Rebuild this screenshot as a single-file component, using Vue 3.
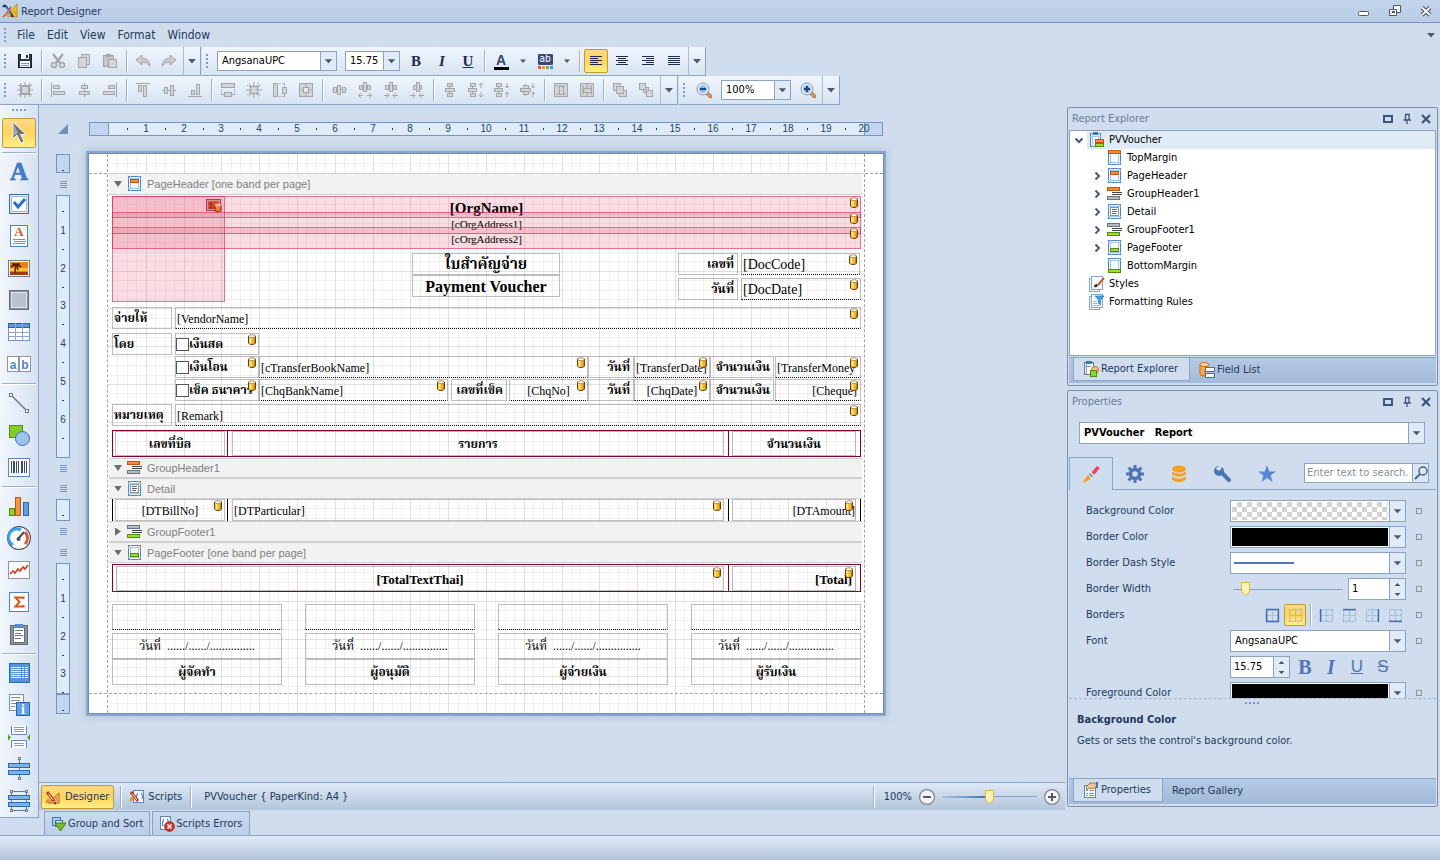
<script setup>
import { ref } from 'vue'

/* ---------- icon drawing helpers ---------- */
const box = (x, y, w, h, fill = '#d3d6d9', stroke = '#a3a5a8') =>
  `<rect x="${x + 0.5}" y="${y + 0.5}" width="${w - 1}" height="${h - 1}" fill="${fill}" stroke="${stroke}"/>`
const bar = (x, y, w, h, fill = '#a3a5a8') => `<rect x="${x}" y="${y}" width="${w}" height="${h}" fill="${fill}"/>`
const line = (d, stroke = '#a3a5a8', w = 1) => `<path d="${d}" fill="none" stroke="${stroke}" stroke-width="${w}"/>`
const lines = (rows, fill = '#1f2c47') => rows.map(([x, y, w]) => bar(x, y, w, 1, fill)).join('')
const dash = (d) => `<path d="${d}" fill="none" stroke="#a3a5a8" stroke-dasharray="1.5 1.5"/>`

const sheet = box(1, 0, 13, 15, '#f7fbff', '#4b83c4') + line('M3.500 0V15M11.500 0V15M1 2.500H14M1 12.500H14', '#a9c6e8')
const hTrio = bar(1, 7, 15, 1) + box(2, 5, 4, 6) + box(6, 3, 4, 10) + box(11, 5, 4, 6)
const vTrio = (x) => bar(x + 4, 1, 1, 14) + box(x + 2, 1, 6, 4) + box(x, 6, 10, 4) + box(x + 2, 11, 6, 4)
const sideArrows = (out) =>
  out
    ? line('M1.500 13.500H6M4 11L1.500 13.500L4 16M14.500 13.500H10M12 11L14.500 13.500L12 16')
    : line('M1 13.500H6M3.500 11L6 13.500L3.500 16M15 13.500H10M12.500 11L10 13.500L12.500 16')
const hSmall = bar(2, 5, 12, 1) + box(2, 3, 4, 5) + box(6, 0, 4, 10) + box(10, 3, 4, 5)
const vSmall = bar(4, 1, 1, 14) + box(2, 1, 6, 4) + box(0, 6, 9, 4) + box(2, 11, 6, 4)
const magnifier = (sign) =>
  `<path d="M10.500 10.500L14.500 14.500" stroke="#9c5a26" stroke-width="3.600" stroke-linecap="round"/><path d="M11 11L14.500 14.500" stroke="#eba35f" stroke-width="2" stroke-linecap="round"/><circle cx="7" cy="7" r="6" fill="#dcebfa" stroke="#8797b0"/><circle cx="7" cy="7" r="4.500" fill="#8dbdee" stroke="#f4f9ff"/>` +
  bar(4, 6, 6, 2, '#26447a') + (sign ? bar(6, 4, 2, 6, '#26447a') : '')
const orangeBar = (x, y, w) => box(x, y, w, 4, '#f08a3c', '#c4560f')
const greenBar = (x, y, w) => box(x, y, w, 4, '#a0dd2a', '#4f8f0b')
const grayBar = (x, y, w) => box(x, y, w, 4, '#b4bac2', '#6d737b')
const blueBar = (x, y, w, h) => box(x, y, w, h, '#7fb2ea', '#2d66b3')
const pencilRuler =
  '<path d="M3 14V4L14 14Z" transform="matrix(-1 0 0 1 17 0)" fill="#f3b35f" stroke="#b8661c"/><path d="M8.500 11.500H11.500V8.500Z" fill="#fde9c0" stroke="#b8661c" stroke-width=".6"/><path d="M2 3L9 12" stroke="#c23b2a" stroke-width="3"/><path d="M3.500 5L8 11" stroke="#f3ead8" stroke-width="1"/><path d="M9.500 13.500L10.800 15" stroke="#222" stroke-width="1.500"/><path d="M1 14L4 10" stroke="#e38f2d" stroke-width="2.400"/>'
const dbCan =
  '<path d="M1.500 2V9Q2 10.500 5 10.500T8.500 9V2Z" fill="#eeb52a" stroke="#6a3d0c"/><path d="M2.500 3H4.500V9.500H2.500Z" fill="#ffe98c"/><path d="M7.500 3V9" stroke="#c98512"/><ellipse cx="5" cy="2.200" rx="3.200" ry="1.500" fill="#fffdf2" stroke="#9a6a28" stroke-width=".7"/>'
const cell = (b) =>
  line('M2.500 2V14M8 2V14M13.500 2V14M2 2.500H14M2 8H14M2 13.500H14', '#8fa5cb').replace('/>', ' stroke-dasharray="1 1"/>') + line(b, '#4269b0', 1.4)

const icons = {
  app: '<path d="M5 13L15 1V14Z" fill="#f8c21c" stroke="#c98a10"/><path d="M10 11L13 8V11Z" fill="#dbe4f2" stroke="#b97b08" stroke-width=".6"/><path d="M1 4Q3 1 5 5L11 14" fill="none" stroke="#18306b" stroke-width="2.200"/><path d="M1 14L6 9L9 4" fill="none" stroke="#d8541c" stroke-width="1.600"/><path d="M4 4L9 12" stroke="#77b5ee"/>',
  save: box(1, 1, 14, 14, '#2c3549', '#1b2233') + bar(4, 1, 8, 5, '#f3f6fa') + bar(9, 2, 2, 3, '#2c3549') + bar(3, 8, 10, 6, '#f3f6fa') + lines([[4, 10, 8], [4, 12, 8]], '#8b94a5'),
  cut: '<path d="M3 1L10 10M13 1L6 10" stroke="#a3a5a8" stroke-width="2.200"/><circle cx="4" cy="12" r="2.500" fill="#dde3ea" stroke="#a3a5a8" stroke-width="1.500"/><circle cx="12" cy="12" r="2.500" fill="#dde3ea" stroke="#a3a5a8" stroke-width="1.500"/>',
  copy: box(5, 1, 9, 11) + box(2, 4, 9, 11),
  paste: box(1, 2, 11, 12, '#c3c5c8') + bar(4, 1, 5, 3) + box(6, 6, 9, 9),
  undo: '<path d="M1 7L7 2V5Q14 5 15 13Q12 9 7 9V12Z" fill="#c9cccf" stroke="#a3a5a8"/>',
  redo: '<path d="M15 7L9 2V5Q2 5 1 13Q4 9 9 9V12Z" fill="#c9cccf" stroke="#a3a5a8"/>',
  alignL: lines([[2, 3, 12], [2, 5, 8], [2, 7, 12], [2, 9, 8], [2, 11, 12]]),
  alignC: lines([[2, 3, 12], [4, 5, 8], [2, 7, 12], [4, 9, 8], [2, 11, 12]]),
  alignR: lines([[2, 3, 12], [6, 5, 8], [2, 7, 12], [6, 9, 8], [2, 11, 12]]),
  alignJ: lines([[2, 3, 12], [2, 5, 12], [2, 7, 12], [2, 9, 12], [2, 11, 12]]),
  gridAlign: box(4, 4, 8, 8) + line('M3.500 1V15M12.500 1V15M1 3.500H15M1 12.500H15') + line('M8 0V3M8 13V16M0 8H3M13 8H16'),
  left: bar(1, 1, 1, 14) + box(3, 3, 7, 4) + box(3, 9, 12, 4),
  center: bar(8, 1, 1, 14) + box(5, 3, 7, 4) + box(3, 9, 11, 4),
  right: bar(14, 1, 1, 14) + box(6, 3, 7, 4) + box(1, 9, 12, 4),
  top: bar(1, 1, 14, 1) + box(3, 3, 4, 7) + box(8, 3, 4, 12),
  middle: bar(1, 8, 14, 1) + box(3, 5, 4, 7) + box(9, 3, 4, 11),
  bottom: bar(1, 14, 14, 1) + box(4, 8, 4, 5) + box(9, 2, 4, 11),
  sameW: box(1, 1, 14, 5) + dash('M1.500 7V12M14.500 7V12') + box(4, 10, 8, 5) + line('M1 12.500H4M12 12.500H15'),
  gridSize: box(4, 4, 8, 8) + dash('M3.500 1V15M12.500 1V15M1 3.500H15M1 12.500H15') + line('M8 0V3M8 13V16M0 8H3M13 8H16'),
  sameH: box(1, 1, 5, 14) + dash('M7 1.500H13M7 14.500H13') + box(10, 5, 5, 7) + line('M12.500 1V4M12.500 12V15'),
  sameBoth: box(1, 1, 14, 14) + box(5, 5, 6, 6, '#e8ebee') + line('M8 1V5M8 11V15M1 8H5M11 8H15'),
  hEq: hTrio,
  hInc: hSmall + sideArrows(true),
  hDec: hSmall + sideArrows(false),
  hRem: box(4, 3, 4, 5) + box(7, 0, 4, 10) + box(10, 3, 3, 5) + sideArrows(false),
  vEq: vTrio(3),
  vInc: vSmall + line('M13 1V6M11 3L13 1L15 3M13 10V15M11 13L13 15L15 13'),
  vDec: vSmall + line('M13 1V6M11 4L13 6L15 4M13 10V15M11 12L13 10L15 12'),
  vRem: bar(5, 2, 1, 12) + box(3, 3, 6, 4) + box(0, 6, 11, 4) + box(3, 9, 6, 4) + line('M13 1V6M11 4L13 6L15 4M13 10V15M11 12L13 10L15 12'),
  cenH: box(1, 1, 14, 14) + line('M3 4H13M3 12H13') + box(6, 4, 5, 9),
  cenV: box(1, 1, 14, 14) + line('M4 3V13M12 3V13M8 2V14') + box(4, 6, 9, 5),
  front: box(1, 1, 8, 8) + box(7, 8, 8, 7) + box(4, 4, 8, 8),
  back: box(5, 5, 6, 6) + box(1, 1, 7, 7) + box(8, 8, 7, 7),
  zoomOut: magnifier(false),
  zoomIn: magnifier(true),
  drop: '<path d="M4 6H12L8 10.500Z" fill="#4d586e"/>',
  tPointer: '<path d="M6 1V18L10 14L14 22L17 20.500L13.500 13.500H19Z" fill="#6d7178" stroke="#f5f5f5"/><path d="M7 4V15L11 12Z" fill="#a4a8ad"/>',
  tLabel: '<text x="12" y="20" text-anchor="middle" font-family="Liberation Serif, serif" font-weight="700" font-size="25" fill="#3f7fcb" stroke="#2a5fa5" stroke-width=".5">A</text>',
  tCheck: box(2, 2, 20, 20, '#e3eaf3', '#3c6ea9') + box(4, 4, 16, 16, '#fff', '#a9b7c9') + line('M7 10L11 15L18 7', '#2a70c0', 3),
  tRich: box(3, 1, 18, 22, '#fbfdff', '#4b83c4') + '<text x="12" y="12" text-anchor="middle" font-family="Liberation Serif, serif" font-weight="700" font-size="13" fill="#d05a17">A</text>' + lines([[6, 15, 12], [7, 17, 12], [6, 19, 12]], '#7193bb'),
  tPic: box(1, 4, 22, 17, '#f7f7f7', '#767c85') + bar(3, 6, 18, 13, '#e8831b') + bar(3, 12, 18, 3, '#f8c23a') + bar(3, 16, 18, 3, '#a33b0c') + line('M8 17Q8 12 9 9M4 11L9 8L14 11M5 8L9 8L13 8M9 8L11 14', '#5a1f04', 1.5),
  tPanel: box(2, 2, 20, 20, '#8d959f', '#636b76') + box(4, 4, 16, 16, '#b9c1cb', '#dde3ea'),
  tTable: box(1, 3, 22, 18, '#fff', '#7593b8') + box(1, 3, 22, 5, '#5c9be0', '#2a64ad') + line('M8.500 3V21M15.500 3V21M1 12.500H23M1 16.500H23', '#8ea6c4'),
  tText: box(0, 4, 12, 16, '#fff', '#8d949d') + box(12, 4, 12, 16, '#fff', '#8d949d') + '<text x="6" y="17" text-anchor="middle" font-family="Liberation Sans, sans-serif" font-weight="700" font-size="12" fill="#4a84cd">a</text><text x="18" y="17" text-anchor="middle" font-family="Liberation Sans, sans-serif" font-weight="700" font-size="12" fill="#4a84cd">b</text>',
  tLine: line('M4 4L20 20', '#6e7784', 1.4) + box(2, 2, 4, 4, '#fff', '#6e7784') + box(18, 18, 4, 4, '#fff', '#6e7784'),
  tShape: box(2, 2, 14, 13, '#86cc26', '#4b9010') + '<circle cx="15.500" cy="15.500" r="7" fill="#9cc3f0" stroke="#3c6fb5"/>',
  tBar: box(1, 3, 22, 19, '#fbfdff', '#5c87bd') + [4, 6, 9, 11, 14, 17, 19].map((x, i) => bar(x, 6, i % 3 === 1 ? 2 : 1, 12, '#3f4c60')).join(''),
  tChart: box(2, 14, 6, 8, '#8fd02a', '#4b9010') + box(8, 3, 6, 19, '#f59243', '#c1560f') + box(16, 8, 6, 14, '#5e9ee2', '#2a64ad'),
  tGauge: '<circle cx="12" cy="12" r="11.400" fill="#fff" stroke="#444c57" stroke-width="1.200"/><path d="M6 19A8.500 8.500 0 0 1 14 4" fill="none" stroke="#3aa2e8" stroke-width="3"/><path d="M18 6A8.500 8.500 0 0 1 18 18" fill="none" stroke="#d9582b" stroke-width="3"/><path d="M11 13L17 6" stroke="#444c57" stroke-width="2"/><circle cx="11.500" cy="13" r="2" fill="#444c57"/>',
  tSpark: box(1, 3, 22, 18, '#fafafa', '#8d949d') + line('M3 16L6 13L8 15L11 11L13 13L16 9L18 11L21 7', '#cf3a1e', 1.6),
  tSigma: box(2, 2, 20, 20, '#fbfdff', '#4b83c4') + line('M16.500 9V7.500H8.500L12.500 12L8.500 16.500H16.500V15', '#d05a17', 2),
  tClip: box(3, 3, 18, 20, '#8f97a1', '#616974') + box(6, 5, 12, 16, '#fff', '#616974') + bar(8, 2, 8, 4, '#4f8fd6') + lines([[8, 8, 8], [8, 11, 6], [8, 13, 8], [8, 16, 6]], '#6e7784'),
  tToc: box(2, 2, 21, 20, '#5a93dc', '#2f67b4') + lines([[4, 6, 10], [4, 8, 10], [4, 10, 10], [4, 12, 10], [4, 14, 10], [4, 16, 10], [15, 6, 2], [15, 8, 2], [15, 10, 2], [15, 12, 2], [15, 14, 2], [15, 16, 2], [18, 6, 3], [18, 8, 3], [18, 10, 3], [18, 12, 3], [18, 14, 3], [18, 16, 3]], '#e8f2fd'),
  tInfo: box(2, 1, 15, 17, '#fbfdff', '#7593b8') + lines([[4, 4, 9], [4, 7, 9], [4, 10, 6], [4, 13, 4]], '#7d8896') + box(9, 9, 14, 14, '#5f9fe6', '#2a64ad') + '<text x="16" y="21" text-anchor="middle" font-family="Liberation Serif, serif" font-weight="700" font-size="14" fill="#fff">i</text>',
  tBreak: line('M4.500 1V9.500H19.500V1M4.500 23V15.500H19.500V23', '#5c87bd') + bar(5, 1, 14, 8, '#fbfdff') + bar(5, 16, 14, 7, '#fbfdff') + lines([[7, 2, 10], [7, 4, 10], [7, 6, 10], [7, 18, 10], [7, 20, 10]], '#8f99a7') + '<path d="M1 9V16L4 12.500ZM23 9V16L20 12.500Z" fill="#55a514"/>',
  tCross1: bar(12, 2, 1, 20, '#6e7784') + box(11, 0, 3, 3, '#fff', '#6e7784') + box(11, 20, 3, 3, '#fff', '#6e7784') + blueBar(1, 6, 22, 5) + blueBar(1, 13, 22, 5),
  tCross2: line('M4.500 2V22M19.500 2V22M4 2.500H20M4 21.500H20', '#6e7784') + box(3, 1, 3, 3, '#fff', '#6e7784') + box(18, 1, 3, 3, '#fff', '#6e7784') + box(3, 20, 3, 3, '#fff', '#6e7784') + box(18, 20, 3, 3, '#fff', '#6e7784') + blueBar(1, 6, 22, 5) + blueBar(1, 13, 22, 5),
  bPH: sheet + orangeBar(3, 3, 9),
  bTM: sheet + orangeBar(1, 0, 13),
  bPF: sheet + greenBar(3, 8, 9),
  bBM: sheet + greenBar(1, 11, 13),
  bDT: sheet + box(3, 3, 9, 9, '#fff', '#8a929c') + lines([[5, 5, 5], [5, 7, 5], [5, 9, 4]], '#59616c'),
  bGH: orangeBar(0, 1, 13) + lines([[5, 6, 10], [5, 8, 10]], '#3c4450') + grayBar(0, 10, 13),
  bGF: grayBar(0, 1, 13) + lines([[5, 6, 10], [5, 8, 10]], '#3c4450') + greenBar(0, 10, 13),
  report: box(1, 1, 11, 14, '#f7fbff', '#4b83c4') + line('M3.500 1V15M9.500 1V15M1 4.500H12', '#a9c6e8') + bar(4, 0, 5, 3, '#3b78c4') + orangeBar(6, 7, 9) + greenBar(6, 11, 9),
  styles: box(0, 2, 11, 14, '#e9f0f8', '#86a9cf') + box(2, 0, 12, 14, '#fbfdff', '#86a9cf') + '<path d="M5 11Q5 8 8 8L9 10Q7 12 5 11Z" fill="#3b2a20"/><path d="M9 9L15 2" stroke="#c9572a" stroke-width="2"/>',
  rules: box(0, 2, 11, 14, '#e9f0f8', '#86a9cf') + box(2, 0, 12, 14, '#fbfdff', '#86a9cf') + lines([[4, 7, 4], [4, 9, 5], [4, 11, 7]], '#a7b1be') + '<path d="M6 2H15L11.500 6V11L9.500 9V6Z" fill="#3fa9e4" stroke="#1d77ba" stroke-width=".7"/>',
  expTab: box(1, 1, 10, 13, '#f7fbff', '#6c7684') + bar(3, 0, 6, 3, '#3b78c4') + line('M3.500 3V13M1 5.500H8', '#8da0b8') + '<circle cx="12" cy="9" r="3.500" fill="#f8c08a" stroke="#c8691c"/>' + box(7, 9, 7, 7, '#8fd02a', '#4b9010'),
  fields: '<path d="M1 2V12Q1 14 5 14H6V8H9V2Z" fill="#f9a84a" stroke="#c86a14"/><ellipse cx="5.500" cy="2.500" rx="4.500" ry="2" fill="#fdd9a8" stroke="#c86a14"/>' + box(6, 5, 10, 5, '#fff', '#3e72b6') + box(6, 11, 10, 5, '#fff', '#3e72b6'),
  propsTab: box(1, 3, 12, 13, '#fbfdff', '#5b86ba') + lines([[3, 8, 2], [6, 8, 5], [3, 11, 2], [6, 11, 5], [3, 13, 2], [6, 13, 5]], '#7d93ad') + '<path d="M3 5L7 1H12L14 4L10 7L6 6L4 8Z" fill="#efc38c" stroke="#99622a" stroke-width=".8"/>' + bar(13, 0, 2, 6, '#3b78c4'),
  designer: pencilRuler,
  scripts: box(4, 1, 11, 13, '#f7fbff', '#5b86ba') + line('M9 4Q8 4 8 6T7 8Q8 8 8 10M12 4Q13 4 13 6T14 8Q13 8 13 10', '#2d66b3') + '<path d="M2 3L9 12" stroke="#c23b2a" stroke-width="3"/><path d="M3.500 5L8 11" stroke="#f3ead8"/><path d="M1 12L4 8" stroke="#e38f2d" stroke-width="2.400"/>',
  group: box(1, 1, 9, 9, '#a8cdf3', '#3e72b6') + box(4, 4, 8, 7, '#d7e7f8', '#3e72b6') + '<path d="M4 7H15L9.500 15Z" fill="#76c01f" stroke="#3f8208"/>',
  errors: box(1, 0, 11, 14, '#f7fbff', '#5b86ba') + line('M5 3Q4 3 4 5T3 7Q4 7 4 10M8 3Q9 3 9 5', '#2d66b3') + '<circle cx="10.500" cy="10.500" r="4.800" fill="#d8382a" stroke="#9c1e14"/><path d="M8.500 8.500L12.500 12.500M12.500 8.500L8.500 12.500" stroke="#fff" stroke-width="1.600"/>',
  maxi: '<rect x="4" y="5" width="8" height="6" fill="none" stroke="#40527a" stroke-width="2"/>',
  pin: '<path d="M6 3.500H11M6.500 3V9M10 3V9M4.500 9H12M8 9V13" stroke="#40527a" stroke-width="1.300" fill="none"/>',
  close: '<path d="M4 4L12 12M12 4L4 12" stroke="#40527a" stroke-width="2.200"/>',
  winMin: '<rect x="2.500" y="8.500" width="10" height="4" rx="1" fill="#fff" stroke="#4d5568"/>',
  winRes: '<path d="M6.500 2.500H13.500V9.500H6.500Z" fill="#fff" stroke="#4d5568"/><path d="M2.500 6.500H9.500V12.500H2.500Z" fill="#fff" stroke="#4d5568"/><rect x="5.500" y="8.500" width="2" height="1" fill="none" stroke="#4d5568"/>',
  winClose: '<path d="M4 4.500L12 12M12 4.500L4 12" stroke="#4d5568" stroke-width="4.200"/><path d="M4 4.500L12 12M12 4.500L4 12" stroke="#fff" stroke-width="1.800"/>',
  brush: '<path d="M9 8L15 1L18 3L12 10Z" fill="#e8465a"/><path d="M7 9L10 12L12 10L9 7Z" fill="#fff"/><path d="M7 9L10 12L11 11L8 8Z" fill="#4269b0"/><path d="M6 10L9 13Q7 16 0 18Q3 15 4 12Z" fill="#f7a321"/>',
  gear: '<circle cx="9" cy="9" r="4.500" fill="none" stroke="#4f74b3" stroke-width="3.500"/><path d="M9 0V4M9 14V18M0 9H4M14 9H18M2.600 2.600L5.500 5.500M12.500 12.500L15.400 15.400M15.400 2.600L12.500 5.500M5.500 12.500L2.600 15.400" stroke="#4f74b3" stroke-width="3"/>',
  data: '<ellipse cx="9" cy="4" rx="7" ry="3.500" fill="#f7a11a"/><path d="M2 6.500Q9 11 16 6.500V9.500Q9 14 2 9.500ZM2 11.500Q9 16 16 11.500V14.500Q9 20 2 14.500Z" fill="#f7a11a"/>',
  wrench: '<path d="M7 7L15 15" stroke="#4f74b3" stroke-width="4" stroke-linecap="round"/><path d="M5 1A5 5 0 1 0 10 6A5 5 0 0 0 8 2L6 6L3 5L2 3Z" fill="#4f74b3"/>',
  star: '<path d="M9 0L11.300 6.500H18L12.600 10.600L14.600 17L9 13.100L3.400 17L5.400 10.600L0 6.500H6.700Z" fill="#5886d8"/>',
  search: '<circle cx="10" cy="6" r="4" fill="none" stroke="#4d607f" stroke-width="1.400"/><path d="M7 9L2 14" stroke="#4d607f" stroke-width="2"/>',
  zMinus: '<circle cx="8" cy="8" r="7.400" fill="#f2f2f4" stroke="#7d8493" stroke-width="1.200"/>' + bar(4, 7, 8, 2, '#555b66'),
  zPlus: '<circle cx="8" cy="8" r="7.400" fill="#f2f2f4" stroke="#7d8493" stroke-width="1.200"/>' + bar(4, 7, 8, 2, '#555b66') + bar(7, 4, 2, 8, '#555b66'),
  bdAll: cell('M2.500 2.500H13.500V13.500H2.500Z'),
  bdNone: cell(''),
  bdL: cell('M2.500 2V14'),
  bdT: cell('M2 2.500H14'),
  bdR: cell('M13.500 2V14'),
  bdB: cell('M2 13.500H14'),
}

/* ---------- toolbars ---------- */
const menus = ['File', 'Edit', 'View', 'Format', 'Window']
const editGroups = [['save'], ['cut', 'copy', 'paste'], ['undo', 'redo']]
const layoutGroups = [
  ['gridAlign'],
  ['left', 'center', 'right'],
  ['top', 'middle', 'bottom'],
  ['sameW', 'gridSize', 'sameH', 'sameBoth'],
  ['hEq', 'hInc', 'hDec', 'hRem'],
  ['vEq', 'vInc', 'vDec', 'vRem'],
  ['cenH', 'cenV'],
  ['front', 'back'],
]
const toolGroups = [
  ['tPointer'],
  ['tLabel', 'tCheck', 'tRich', 'tPic', 'tPanel', 'tTable', 'tText'],
  ['tLine', 'tShape', 'tBar'],
  ['tChart', 'tGauge', 'tSpark', 'tSigma', 'tClip'],
  ['tToc', 'tInfo', 'tBreak', 'tCross1', 'tCross2'],
]

/* ---------- report surface ---------- */
const CM = 37.8
const gridPath = (w, h, major) => {
  let d = ''
  for (let i = 1; i * CM / 4 < w; i++) if ((i % 4 === 0) === major) d += `M${Math.round(i * CM / 4) + 0.5} 0V${h}`
  for (let i = 1; i * CM / 4 < h; i++) if ((i % 4 === 0) === major) d += `M0 ${Math.round(i * CM / 4) + 0.5}H${w}`
  return d
}
const hTicks = Array.from({ length: 41 }, (_, i) => ({ at: 18 + Math.round((i * CM) / 2), label: i % 2 ? '' : i ? String(i / 2) : '', dot: i % 2 === 1 }))
const vTicks = (h) => {
  const out = []
  for (let i = 1; Math.round((i * CM) / 2) - 2 < h; i++) {
    const at = Math.round((i * CM) / 2) - 2
    if (i % 2) out.push({ at, label: '', dot: true })
    else if (at < h - 4) out.push({ at, label: String(i / 2) })
  }
  return out
}
const vRuler = [
  { h: 19, edge: true }, { gap: 22 }, { h: 263 }, { gap: 20 }, { gap: 21 }, { h: 22 }, { gap: 21 }, { gap: 21 }, { h: 131 }, { h: 20, edge: true },
]

const c = (x, y, w, h, text = '', cls = '', db = false) => ({ x, y, w, h, text, cls, db })
const bands = [
  { h: 19 },
  {
    title: 'PageHeader [one band per page]', icon: 'bPH', open: true, head: 22, h: 263,
    items: [
      c(4, 1, 113, 106, '', 'pink pic'),
      c(4, 1, 749, 22, '[OrgName]', 'pink mid b s15', true),
      c(4, 17, 749, 22, '[cOrgAddress1]', 'pink mid s11', true),
      c(4, 32, 749, 22, '[cOrgAddress2]', 'pink mid s11', true),
      c(304, 58, 148, 22, 'ใบสำคัญจ่าย', 'mid b th s15'),
      c(304, 80, 148, 22, 'Payment Voucher', 'mid b s16'),
      c(570, 58, 60, 22, 'เลขที่', 'end b th'),
      c(633, 58, 119, 22, '[DocCode]', 'dot s14', true),
      c(570, 83, 60, 22, 'วันที่', 'end b th'),
      c(633, 83, 120, 22, '[DocDate]', 'dot s14', true),
      c(4, 112, 60, 22, 'จ่ายให้', 'b th'),
      c(67, 112, 686, 22, '[VendorName]', 'dot', true),
      c(4, 138, 60, 22, 'โดย', 'b th'),
      c(67, 138, 84, 22, 'เงินสด', 'b th chk', true),
      c(67, 161, 84, 22, 'เงินโอน', 'b th chk', true),
      c(151, 161, 329, 22, '[cTransferBookName]', 'dot', true),
      c(480, 161, 46, 22, 'วันที่', 'end b th'),
      c(526, 161, 76, 22, '[TransferDate]', 'dot', true),
      c(602, 161, 64, 22, 'จำนวนเงิน', 'end b th'),
      c(667, 161, 86, 22, '[TransferMoney', 'dot', true),
      c(67, 184, 84, 22, 'เช็ค ธนาคาร', 'b th chk', true),
      c(151, 184, 189, 22, '[ChqBankName]', 'dot', true),
      c(343, 184, 56, 22, 'เลขที่เช็ค', 'end b th'),
      c(401, 184, 79, 22, '[ChqNo]', 'dot mid', true),
      c(480, 184, 46, 22, 'วันที่', 'end b th'),
      c(526, 184, 76, 22, '[ChqDate]', 'dot mid', true),
      c(602, 184, 64, 22, 'จำนวนเงิน', 'end b th'),
      c(667, 184, 86, 22, '[Cheque]', 'dot end', true),
      c(4, 209, 60, 22, 'หมายเหตุ', 'b th'),
      c(67, 209, 686, 22, '[Remark]', 'dot', true),
      c(4, 235, 749, 27, '', 'frame'),
      c(119, 235, 1, 27, '', 'rule'),
      c(620, 235, 1, 27, '', 'rule'),
      c(7, 236, 110, 25, 'เลขที่บิล', 'mid b th'),
      c(124, 236, 492, 25, 'รายการ', 'mid b th'),
      c(624, 236, 124, 25, 'จำนวนเงิน', 'mid b th'),
    ],
  },
  { title: 'GroupHeader1', icon: 'bGH', open: true, head: 20, h: 0 },
  {
    title: 'Detail', icon: 'bDT', open: true, head: 21, h: 22,
    items: [
      c(4, 0, 749, 22, '', 'sides'),
      c(119, 0, 1, 22, '', 'ink'),
      c(620, 0, 1, 22, '', 'ink'),
      c(7, 0, 110, 22, '[DTBillNo]', 'mid', true),
      c(124, 0, 492, 22, '[DTParticular]', '', true),
      c(624, 0, 124, 22, '[DTAmount]', 'end flush', true),
    ],
  },
  { title: 'GroupFooter1', icon: 'bGF', open: false, head: 21, h: 0 },
  {
    title: 'PageFooter [one band per page]', icon: 'bPF', open: true, head: 21, h: 131,
    items: [
      c(4, 1, 749, 28, '', 'frame'),
      c(620, 1, 1, 28, '', 'rule'),
      c(8, 3, 608, 25, '[TotalTextThai]', 'mid b s13', true),
      c(624, 3, 124, 25, '[Total]', 'end b s13', true),
      ...['ผู้จัดทำ', 'ผู้อนุมัติ', 'ผู้จ่ายเงิน', 'ผู้รับเงิน'].flatMap((who, i) => [
        c(4 + 193 * i, 41, 170, 26, '', 'dot'),
        c(4 + 193 * i, 70, 170, 26, 'วันที่  ....../....../...............', 'mid th'),
        c(4 + 193 * i, 96, 170, 26, who, 'mid b th'),
      ]),
    ],
  },
  { h: 19 },
]

/* ---------- explorer and properties ---------- */
const tree = [
  { label: 'PVVoucher', icon: 'report', level: 0, arrow: 'down', active: true },
  { label: 'TopMargin', icon: 'bTM', level: 1 },
  { label: 'PageHeader', icon: 'bPH', level: 1, arrow: 'right' },
  { label: 'GroupHeader1', icon: 'bGH', level: 1, arrow: 'right' },
  { label: 'Detail', icon: 'bDT', level: 1, arrow: 'right' },
  { label: 'GroupFooter1', icon: 'bGF', level: 1, arrow: 'right' },
  { label: 'PageFooter', icon: 'bPF', level: 1, arrow: 'right' },
  { label: 'BottomMargin', icon: 'bBM', level: 1 },
  { label: 'Styles', icon: 'styles', level: 0 },
  { label: 'Formatting Rules', icon: 'rules', level: 0 },
]
const propTabs = ['brush', 'gear', 'data', 'wrench', 'star']
const borderWidth = ref(1)
const thickness = ref(8)
const fontSize = ref('15.75')
const zoom = ref(50)
const query = ref('')
</script>

<template>
  <div class="app">
    <header class="titlebar">
      <svg class="i16" viewBox="0 0 16 16" v-html="icons.app"></svg>
      <h1>Report Designer</h1>
      <div class="winbtns">
        <button v-for="n in ['winMin', 'winRes', 'winClose']" :key="n" :aria-label="n"><svg class="i16" viewBox="0 0 16 16" v-html="icons[n]"></svg></button>
      </div>
    </header>

    <nav class="menubar">
      <span class="grip"></span>
      <button v-for="m in menus" :key="m">{{ m }}</button>
      <button class="more" aria-label="More"><svg class="i16" viewBox="0 0 16 16" v-html="icons.drop"></svg></button>
    </nav>

    <div class="toolrow">
      <div class="toolbar">
        <span class="grip"></span>
        <template v-for="(g, gi) in editGroups" :key="gi">
          <span v-if="gi" class="sep"></span>
          <button v-for="n in g" :key="n" class="tb" :aria-label="n"><svg class="i16" viewBox="0 0 16 16" v-html="icons[n]"></svg></button>
        </template>
        <button class="overflow" aria-label="Toolbar options"><svg class="i16" viewBox="0 0 16 16" v-html="icons.drop"></svg></button>
      </div>
      <div class="toolbar">
        <span class="grip"></span>
        <span class="combo w120"><select aria-label="Font name"><option>AngsanaUPC</option></select><svg class="arrow" viewBox="0 0 16 16" v-html="icons.drop"></svg></span>
        <span class="combo w55"><select aria-label="Font size"><option>15.75</option></select><svg class="arrow" viewBox="0 0 16 16" v-html="icons.drop"></svg></span>
        <button class="tb letter"><b>B</b></button>
        <button class="tb letter"><i>I</i></button>
        <button class="tb letter"><u>U</u></button>
        <span class="sep"></span>
        <button class="tb fore" aria-label="Foreground color"><span>A</span></button>
        <button class="tiny" aria-label="Pick foreground"><svg class="i12" viewBox="0 0 16 16" v-html="icons.drop"></svg></button>
        <button class="tb back" aria-label="Background color"><span>ab</span><em></em></button>
        <button class="tiny" aria-label="Pick background"><svg class="i12" viewBox="0 0 16 16" v-html="icons.drop"></svg></button>
        <span class="sep"></span>
        <button v-for="n in ['alignL', 'alignC', 'alignR', 'alignJ']" :key="n" class="tb" :class="{ on: n === 'alignL' }" :aria-label="n"><svg class="i16" viewBox="0 0 16 16" v-html="icons[n]"></svg></button>
        <button class="overflow" aria-label="Toolbar options"><svg class="i16" viewBox="0 0 16 16" v-html="icons.drop"></svg></button>
      </div>
    </div>
    <div class="toolrow">
      <div class="toolbar">
        <span class="grip"></span>
        <template v-for="(g, gi) in layoutGroups" :key="gi">
          <span v-if="gi" class="sep"></span>
          <button v-for="n in g" :key="n" class="tb" :aria-label="n"><svg class="i16" viewBox="0 0 16 16" v-html="icons[n]"></svg></button>
        </template>
        <button class="overflow" aria-label="Toolbar options"><svg class="i16" viewBox="0 0 16 16" v-html="icons.drop"></svg></button>
      </div>
      <div class="toolbar">
        <span class="grip"></span>
        <button class="tb" aria-label="Zoom out"><svg class="i16" viewBox="0 0 16 16" v-html="icons.zoomOut"></svg></button>
        <span class="combo w70"><select aria-label="Zoom"><option>100%</option></select><svg class="arrow" viewBox="0 0 16 16" v-html="icons.drop"></svg></span>
        <button class="tb" aria-label="Zoom in"><svg class="i16" viewBox="0 0 16 16" v-html="icons.zoomIn"></svg></button>
        <button class="overflow" aria-label="Toolbar options"><svg class="i16" viewBox="0 0 16 16" v-html="icons.drop"></svg></button>
      </div>
    </div>

    <main class="work">
      <aside class="toolbox">
        <span class="hgrip"></span>
        <template v-for="(g, gi) in toolGroups" :key="gi">
          <span v-if="gi" class="hsep"></span>
          <button v-for="n in g" :key="n" :class="{ on: n === 'tPointer' }" :aria-label="n"><svg class="i24" viewBox="0 0 24 24" v-html="icons[n]"></svg></button>
        </template>
      </aside>

      <section class="center">
        <div class="canvas">
          <span class="corner"></span>
          <div class="hruler">
            <span v-for="(t, i) in hTicks" :key="i" class="tick" :class="{ pt: t.dot }" :style="{ left: t.at + 'px' }">{{ t.label }}</span>
          </div>
          <div class="vruler">
            <template v-for="(s, i) in vRuler" :key="i">
              <span v-if="s.gap" class="vgap" :style="{ height: s.gap + 'px' }"></span>
              <div v-else class="vseg" :class="{ edge: s.edge }" :style="{ height: s.h + 'px' }">
                <span v-for="(t, k) in vTicks(s.h)" :key="k" class="tick" :class="{ pt: t.dot }" :style="{ top: t.at + 'px' }">{{ t.label }}</span>
              </div>
            </template>
          </div>
          <div class="page">
            <div class="sheet">
              <div v-for="(b, i) in bands" :key="i" class="band">
                <div v-if="b.title" class="bandhead" :style="{ height: b.head + 'px' }">
                  <span class="tri" :class="{ shut: !b.open }"></span>
                  <svg class="i16" viewBox="0 0 16 16" v-html="icons[b.icon]"></svg>
                  <span>{{ b.title }}</span>
                </div>
                <div v-if="b.h" class="bandbody" :style="{ height: b.h + 'px' }">
                  <svg class="grid" width="755" :height="b.h">
                    <path :d="gridPath(755, b.h, false)" stroke="#f0f0f0" />
                    <path :d="gridPath(755, b.h, true)" stroke="#e0e0e0" />
                  </svg>
                  <div v-for="(it, k) in b.items" :key="k" class="item" :class="it.cls" :style="{ left: it.x + 'px', top: it.y + 'px', width: it.w + 'px', height: it.h + 'px' }">
                    <input v-if="it.cls.includes('chk')" type="checkbox" :aria-label="it.text" />
                    <span v-if="it.text">{{ it.text }}</span>
                    <svg v-if="it.db" class="db" viewBox="0 0 10 11" v-html="dbCan"></svg>
                    <svg v-if="it.cls.includes('pic')" class="picmark" viewBox="0 0 16 14">
                      <rect x=".5" y=".5" width="14" height="11" fill="#d9a3ac" stroke="#8d4450" />
                      <rect x="2" y="2" width="11" height="8" fill="#d8532c" />
                      <path d="M3 5Q5 3 7 5M5 4V9M3 9H9" fill="none" stroke="#7c1f10" />
                      <path d="M9 6V12Q12 14 15 12V6Z" fill="#f08a22" stroke="#6b2408" />
                      <ellipse cx="12" cy="6" rx="3" ry="1.500" fill="#ffc898" />
                    </svg>
                  </div>
                </div>
              </div>
            </div>
          </div>
        </div>

        <footer class="viewbar">
          <button class="view on"><svg class="i16" viewBox="0 0 16 16" v-html="icons.designer"></svg>Designer</button>
          <span class="sep"></span>
          <button class="view"><svg class="i16" viewBox="0 0 16 16" v-html="icons.scripts"></svg>Scripts</button>
          <span class="sep"></span>
          <span class="paper">PVVoucher { PaperKind: A4 }</span>
          <div class="zoomer">
            <span class="sep"></span>
            <span>100%</span>
            <button aria-label="Smaller"><svg class="i16" viewBox="0 0 16 16" v-html="icons.zMinus"></svg></button>
            <input v-model="zoom" type="range" class="slider glow" aria-label="Zoom level" />
            <button aria-label="Larger"><svg class="i16" viewBox="0 0 16 16" v-html="icons.zPlus"></svg></button>
          </div>
        </footer>
        <div class="hidden-tabs">
          <button><svg class="i16" viewBox="0 0 16 16" v-html="icons.group"></svg>Group and Sort</button>
          <button><svg class="i16" viewBox="0 0 16 16" v-html="icons.errors"></svg>Scripts Errors</button>
        </div>
      </section>

      <aside class="dock">
        <section class="panel explorer">
          <header>
            <h2>Report Explorer</h2>
            <button v-for="n in ['maxi', 'pin', 'close']" :key="n" :aria-label="n"><svg class="i16" viewBox="0 0 16 16" v-html="icons[n]"></svg></button>
          </header>
          <ul class="tree">
            <li v-for="t in tree" :key="t.label" :class="['l' + t.level, { active: t.active }]">
              <span class="twist"><svg v-if="t.arrow" class="i10" viewBox="0 0 10 10"><path :d="t.arrow === 'down' ? 'M1.500 3.500L5 7L8.500 3.500' : 'M3.500 1.500L7 5L3.500 8.500'" fill="none" stroke="#48597c" stroke-width="2" /></svg></span>
              <span class="node"><svg class="i16" viewBox="0 0 16 16" v-html="icons[t.icon]"></svg>{{ t.label }}</span>
            </li>
          </ul>
          <div class="tabs">
            <button class="cur"><svg class="i16" viewBox="0 0 16 16" v-html="icons.expTab"></svg>Report Explorer</button>
            <button><svg class="i16" viewBox="0 0 16 16" v-html="icons.fields"></svg>Field List</button>
          </div>
        </section>

        <section class="panel props">
          <header>
            <h2>Properties</h2>
            <button v-for="n in ['maxi', 'pin', 'close']" :key="n" :aria-label="n"><svg class="i16" viewBox="0 0 16 16" v-html="icons[n]"></svg></button>
          </header>
          <span class="combo target"><select aria-label="Selected object"><option>PVVoucher&nbsp;&nbsp; Report</option></select><svg class="arrow" viewBox="0 0 16 16" v-html="icons.drop"></svg></span>
          <div class="cats">
            <button v-for="n in propTabs" :key="n" :class="{ cur: n === 'brush' }" :aria-label="n"><svg class="i18" viewBox="0 0 18 18" v-html="icons[n]"></svg></button>
            <div class="find">
              <input v-model="query" type="text" placeholder="Enter text to search." aria-label="Search properties" />
              <button aria-label="Search"><svg class="i16" viewBox="0 0 16 16" v-html="icons.search"></svg></button>
            </div>
          </div>
          <div class="rows">
            <div class="row">
              <label for="bg">Background Color</label>
              <span class="combo"><button id="bg" class="swatch checker" aria-label="Transparent"></button><svg class="arrow" viewBox="0 0 16 16" v-html="icons.drop"></svg></span><i></i>
            </div>
            <div class="row">
              <label for="bc">Border Color</label>
              <span class="combo"><button id="bc" class="swatch black" aria-label="Black"></button><svg class="arrow" viewBox="0 0 16 16" v-html="icons.drop"></svg></span><i></i>
            </div>
            <div class="row">
              <label for="bs">Border Dash Style</label>
              <span class="combo"><button id="bs" class="swatch solid" aria-label="Solid"></button><svg class="arrow" viewBox="0 0 16 16" v-html="icons.drop"></svg></span><i></i>
            </div>
            <div class="row">
              <label for="bw">Border Width</label>
              <span class="widths">
                <input v-model="thickness" type="range" class="slider" aria-label="Border width slider" />
                <span class="spin"><input id="bw" v-model="borderWidth" type="text" /><span class="updown"></span></span>
              </span><i></i>
            </div>
            <div class="row">
              <span class="label">Borders</span>
              <span class="borders">
                <button aria-label="All borders"><svg class="i18" viewBox="1 1 14 14" v-html="icons.bdAll"></svg></button>
                <button class="on" aria-label="No borders"><svg class="i18" viewBox="1 1 14 14" v-html="icons.bdNone"></svg></button>
                <span class="sep"></span>
                <button v-for="n in ['bdL', 'bdT', 'bdR', 'bdB']" :key="n" :aria-label="n"><svg class="i18" viewBox="1 1 14 14" v-html="icons[n]"></svg></button>
              </span><i></i>
            </div>
            <div class="row">
              <label for="fn">Font</label>
              <span class="combo"><select id="fn"><option>AngsanaUPC</option></select><svg class="arrow" viewBox="0 0 16 16" v-html="icons.drop"></svg></span><i></i>
            </div>
            <div class="row">
              <span class="label"></span>
              <span class="fontrow">
                <span class="spin"><input v-model="fontSize" type="text" aria-label="Size" /><span class="updown"></span></span>
                <button><b>B</b></button><button><i>I</i></button><button class="sans"><u>U</u></button><button class="sans"><s>S</s></button>
              </span>
            </div>
            <div class="row">
              <label for="fc">Foreground Color</label>
              <span class="combo"><button id="fc" class="swatch black" aria-label="Black"></button><svg class="arrow" viewBox="0 0 16 16" v-html="icons.drop"></svg></span><i></i>
            </div>
          </div>
          <div class="splitter"><span></span></div>
          <div class="hint">
            <h3>Background Color</h3>
            <p>Gets or sets the control's background color.</p>
          </div>
          <div class="tabs">
            <button class="cur"><svg class="i16" viewBox="0 0 16 16" v-html="icons.propsTab"></svg>Properties</button>
            <button>Report Gallery</button>
          </div>
        </section>
      </aside>
    </main>
    <div class="status"></div>
  </div>
</template>

<style>
html, body { margin: 0; background: #cfddee; }
</style>

<style scoped>
.app {
  --edge: #8ba3c5;
  --ink: #1e395b;
  display: flex; flex-direction: column; min-height: 100vh;
  background: #cfddee; color: var(--ink);
  font: 11px/14px "DejaVu Sans Condensed", "Noto Sans", sans-serif;
}
* { box-sizing: border-box; }
h1, h2, h3, p, ul { margin: 0; padding: 0; font-size: 11px; font-weight: 400; }
ul { list-style: none; }
button { font: inherit; color: inherit; background: none; border: 0; padding: 0; display: flex; align-items: center; justify-content: center; }
svg { display: block; flex: none; }
.i10 { width: 10px; height: 10px; }
.i12 { width: 12px; height: 12px; }
.i16 { width: 16px; height: 16px; }
.i18 { width: 18px; height: 18px; }
.i24 { width: 24px; height: 24px; overflow: visible; }

.titlebar { display: flex; align-items: center; height: 23px; padding: 0 6px 0 2px; gap: 3px; background: linear-gradient(#c3d5ee, #b9cce5); border-bottom: 1px solid #7192bd; }
.titlebar h1 { padding-top: 2px; }
.winbtns { display: flex; gap: 15px; margin-left: auto; }
.menubar { display: flex; align-items: center; height: 24px; font-size: 12px; }
.menubar button { height: 22px; padding: 0 6px; }
.menubar .grip + button { margin-left: -1px; }
.menubar .more { margin-left: auto; padding: 0 1px; }
.grip { width: 12px; height: 15px; flex: none; background: repeating-linear-gradient(#7d99c3 0 2px, transparent 2px 4px) 4px 0 / 2px 15px no-repeat; }

.toolrow { display: flex; gap: 1px; }
.toolbar { display: flex; align-items: center; height: 29px; background: linear-gradient(#eff5fd, #d8e4f2); border-bottom: 1px solid var(--edge); border-right: 1px solid var(--edge); }
.sep { width: 7px; height: 22px; flex: none; background: linear-gradient(90deg, #9cb1cf 0 1px, #fff 1px 2px) 3px 0 / 2px 100% no-repeat; }
.tb { width: 26px; height: 24px; flex: none; }
.tb.on { width: 24px; margin: 0 1px; }
.on { border: 1px solid #c29a3a; border-radius: 2px; background: linear-gradient(#fbd98a, #ffd45e 50%, #ffef86); }
.overflow { width: 17px; height: 28px; margin-left: 1px; border-left: 1px solid #a9bcd6; }
.tiny { width: 18px; height: 24px; }
.combo { display: flex; height: 20px; border: 1px solid var(--edge); background: #fff; }
.combo select { flex: 1; min-width: 0; appearance: none; border: 0; background: #fff; color: #000; font: inherit; padding: 0 0 0 4px; outline: 0; }
.combo .arrow { width: 16px; height: 100%; background: #e1ebf7; border-left: 1px solid var(--edge); }
.w120 { width: 120px; margin: 0 8px 0 3px; }
.w55 { width: 55px; margin-right: 3px; }
.w70 { width: 70px; margin: 0 4px; }
.letter { font: 700 15px/18px "Liberation Serif", serif; color: #1f2c47; }
.fore span { font: 700 14px/14px "Liberation Sans", sans-serif; color: #33446d; border-bottom: 3px solid #000; width: 15px; }
.back { flex-direction: column; gap: 1px; }
.back span { width: 15px; height: 11px; border-radius: 1px; background: #3b4a75; color: #fff; font-size: 10px; line-height: 10px; }
.back em { width: 15px; height: 3px; background: linear-gradient(90deg, #e0604c 0 3px, transparent 3px 4px, #e59a2c 4px 7px, transparent 7px 8px, #7fae35 8px 11px, transparent 11px 12px, #4a9ad4 12px); }

.work { display: flex; flex: 1; }
.toolbox { width: 39px; flex: none; align-self: flex-start; display: flex; flex-direction: column; align-items: center; background: linear-gradient(90deg, #f1f6fd, #d7e3f2); border-right: 1px solid var(--edge); border-bottom: 1px solid var(--edge); }
.toolbox button { width: 34px; height: 32px; }
.toolbox button.on { height: 30px; margin: 1px 0; }
.hgrip { width: 15px; height: 12px; background: repeating-linear-gradient(90deg, #7d99c3 0 2px, transparent 2px 4px) 0 4px / 15px 2px no-repeat; }
.hsep { width: 34px; height: 7px; background: linear-gradient(#9cb1cf 0 1px, #fff 1px) 0 3px / 100% 2px no-repeat; }

.center { flex: 1; min-width: 0; display: flex; flex-direction: column; }
.canvas { flex: 1; display: grid; grid-template-columns: 14px 796px; grid-template-rows: 14px auto; column-gap: 18px; row-gap: 17px; align-content: start; padding: 17px 0 0 17px; overflow: hidden; }
.corner { width: 10px; height: 10px; margin: 2px 0 0 2px; background: #6f8fb9; clip-path: polygon(100% 0, 100% 100%, 0 100%); }
.hruler { position: relative; margin: 0 1px; height: 14px; border: 1px solid #7694bf; background: linear-gradient(90deg, #c3d6ef 18px, #7694bf 18px 19px, #deebf8 19px 774px, #7694bf 774px 775px, #c3d6ef 775px); }
.tick { position: absolute; width: 20px; height: 12px; text-align: center; font: 10px/12px "Liberation Sans", sans-serif; color: #253f66; }
.tick.pt { background: linear-gradient(#253f66, #253f66) 50% 5px / 1px 2px no-repeat; }
.hruler .tick { top: 0; margin-left: -10px; }
.vruler { width: 14px; padding-top: 1px; }
.vseg { position: relative; border: 1px solid #7694bf; background: #deebf8; }
.vseg.edge { background: #c3d6ef; }
.vseg .tick { left: -4px; margin-top: -7px; }
.vseg .tick.pt { background-size: 2px 1px; }
.vgap { display: block; background: repeating-linear-gradient(#8195b4 0 1px, transparent 1px 2px) 4px 50% / 7px 7px no-repeat; }

.page { box-shadow: 0 0 0 2px #8ba5cb, 0 0 8px 3px #b3c3da; border: 1px solid #6f8ebb; background: #fff; }
.sheet { position: relative; padding: 0 19px; }
.sheet::before, .sheet::after { content: ""; position: absolute; inset: 0 18px; border: dashed #a3a3a3; border-width: 0 1px; pointer-events: none; }
.sheet::after { inset: 19px 0; border-width: 1px 0; }
.bandhead { position: relative; z-index: 1; display: flex; align-items: center; gap: 4px; padding-left: 5px; margin: 0 2px 0 1px; background: #f2f2f2; border: solid #cfcfcf; border-width: 1px 0; color: #808080; font: 11px/14px "Liberation Sans", sans-serif; }
.tri { width: 8px; height: 6px; margin-right: 1px; background: #6b6b6b; clip-path: polygon(0 0, 100% 0, 50% 100%); }
.tri.shut { width: 6px; height: 8px; margin: 0 2px 0 1px; clip-path: polygon(0 0, 100% 50%, 0 100%); }
.bandbody { position: relative; }
.grid { position: absolute; inset: 0; }
.item { position: absolute; display: flex; align-items: center; padding: 0 1px; border: 1px solid rgba(110, 110, 110, .45); color: #000; font: 12px/16px "Liberation Serif", "Noto Serif Thai", serif; white-space: pre; }
.item > span { padding-top: 2px; }
.mid { justify-content: center; }
.end { justify-content: flex-end; padding-right: 3px; }
.flush { padding-right: 0; }
.b { font-weight: 700; }
.s11 { font-size: 11px; }
.s13 { font-size: 13px; }
.s14 { font-size: 14px; }
.s15 { font-size: 15px; }
.s16 { font-size: 16px; }
.th > span { padding-top: 0; }
.dot { border-bottom: 1px dotted #000; }
.pink { border-color: rgba(222, 40, 90, .6); background: rgba(226, 70, 105, .19); }
.frame { border-color: #86002f; }
.sides { border-color: #000; border-width: 0 1px; }
.rule { border: 0; padding: 0; background: #86002f; }
.ink { border: 0; padding: 0; background: #000; }
.chk input { appearance: none; width: 13px; height: 13px; margin: 0 0 0 -1px; border: 1px solid #555; background: #fff; flex: none; }
.db { position: absolute; top: 0; right: 1px; width: 10px; height: 11px; }
.picmark { position: absolute; top: 2px; right: 2px; width: 16px; height: 14px; }

.viewbar { display: flex; align-items: center; height: 28px; margin-right: 2px; padding: 0 5px 0 2px; border-top: 1px solid var(--edge); background: linear-gradient(#dde8f6, #b4c5da); }
.view { height: 24px; gap: 3px; }
.view.on { padding: 0 4px 0 3px; gap: 4px; margin-right: 3px; }
.viewbar .sep + .view { padding: 0 5px; }
.paper { margin-left: 10px; }
.zoomer { margin-left: auto; display: flex; align-items: center; gap: 7px; }
.slider { appearance: none; height: 14px; margin: 0; background: linear-gradient(#8ba3c5, #8ba3c5) 0 50% / 100% 1px no-repeat; }
.zoomer .slider { width: 95px; }
.slider.glow { background: linear-gradient(90deg, #a9c4e4, #3c6fb3) 0 50% / 46px 2px no-repeat, linear-gradient(#8ba3c5, #8ba3c5) 0 50% / 100% 1px no-repeat; }
.slider::-webkit-slider-thumb { appearance: none; width: 9px; height: 14px; background: url("data:image/svg+xml,%3Csvg xmlns='http://www.w3.org/2000/svg' width='9' height='14'%3E%3Cpath d='M.5 .5H8.500V10L4.500 13.500L.5 10Z' fill='%23fdf1b5' stroke='%23e0b43c'/%3E%3C/svg%3E"); }
.hidden-tabs { display: flex; gap: 2px; height: 25px; padding-left: 5px; border-top: 1px solid #cfddee; }
.hidden-tabs button { padding: 0 6px; gap: 1px; border: 1px solid var(--edge); border-bottom: 0; background: linear-gradient(#c9daef, #bccfe8); }

.dock { width: 371px; flex: none; margin: 2px 2px 28px 0; display: flex; flex-direction: column; gap: 4px; }
.panel { display: flex; flex-direction: column; border: 1px solid #7d8fa9; border-radius: 2px; padding: 0 1px 2px; }
.panel > header { display: flex; align-items: center; height: 22px; padding: 0 2px 0 3px; gap: 3px; color: #6a7b9b; }
.panel h2 { margin-right: auto; }
.panel header button { width: 16px; height: 16px; }
.tree { border: 1px solid var(--edge); background: #fff; height: 226px; color: #000; }
.tree li { display: flex; height: 18px; }
.twist { width: 17px; display: flex; align-items: center; justify-content: center; flex: none; }
.l1 .twist { margin-left: 18px; }
.node { flex: 1; display: flex; align-items: center; gap: 4px; padding-left: 2px; }
.active .node { background: #e1ebf6; }
.tabs { display: flex; height: 26px; padding: 0 4px; border-top: 1px solid var(--edge); background: linear-gradient(#b4c9e4, #a3bad8); }
.tabs button { height: 23px; padding: 0 9px; gap: 2px; }
.tabs .cur { background: #cfddee; border: solid var(--edge); border-width: 0 1px 1px; padding: 0 11px 0 9px; }
.explorer .tabs { margin-top: 1px; }
.props { flex: 1; }
.target { height: 22px; margin: 9px 11px 0 10px; }
.target select { font-weight: 700; }
.cats { display: flex; height: 33px; margin-top: 13px; border-bottom: 1px solid var(--edge); }
.cats > button { width: 44px; height: 33px; flex: none; }
.cats .cur { border: 1px solid var(--edge); border-bottom: 0; background: #cfddee; }
.find { display: flex; flex: 1; min-width: 0; height: 20px; margin: 6px 7px 0 15px; border: 1px solid var(--edge); background: #fff; }
.find input { flex: 1; min-width: 0; border: 0; background: none; padding: 0 0 0 2px; font: inherit; outline: 0; }
.find input::placeholder { color: #8a8f98; opacity: 1; }
.find button { width: 16px; background: #dbe7f5; border-left: 1px solid var(--edge); }
.rows { height: 208px; overflow: hidden; padding: 8px 14px 0 17px; flex: none; }
.row { display: grid; grid-template-columns: 144px 176px 16px; height: 26px; align-items: center; }
.row > i { width: 6px; height: 6px; margin-left: 10px; border: 1px solid #8c929b; }
.row .combo { height: 22px; }
.swatch { flex: 1; margin: 1px; }
.checker { background: repeating-conic-gradient(#d3d3d3 0 25%, #fff 0 50%) 0 0 / 10px 10px; }
.black { background: #000; }
.solid { background: linear-gradient(#5474b4, #5474b4) 2px 50% / 60px 2px no-repeat; }
.widths, .borders, .fontrow { display: flex; align-items: center; }
.widths .slider { width: 110px; margin: 0 5px 0 3px; }
.spin { display: flex; height: 22px; width: 58px; border: 1px solid var(--edge); background: #fff; }
.spin input { flex: 1; min-width: 0; border: 0; padding: 0 0 0 3px; font: inherit; color: #000; outline: 0; background: none; }
.updown { width: 16px; border-left: 1px solid var(--edge); background: conic-gradient(from 135deg at 50% 0, #4d586e 90deg, transparent 0) 50% 4px / 5px 3px no-repeat, conic-gradient(from -45deg at 50% 100%, #4d586e 90deg, transparent 0) 50% 14px / 5px 3px no-repeat, #e1ebf7; }
.borders { justify-content: flex-end; gap: 1px; }
.borders button { width: 22px; height: 22px; }
.borders .i18 { width: 15px; height: 15px; }
.borders .sep { width: 7px; }
.fontrow button { width: 26px; height: 22px; font: 700 20px/20px "Liberation Serif", serif; color: #5474b4; }
.fontrow .sans { font: 17px/20px "Liberation Sans", sans-serif; }
.fontrow .spin { width: 60px; margin-right: 2px; }
.splitter { height: 8px; border-top: 1px dashed #a3b6d0; display: flex; justify-content: center; align-items: center; }
.splitter span { width: 15px; height: 2px; background: repeating-linear-gradient(90deg, #7d99c3 0 2px, transparent 2px 4px); }
.hint { flex: 1; padding: 7px 8px; }
.hint h3 { font-weight: 700; margin-bottom: 7px; }
.status { height: 25px; border-top: 1px solid var(--edge); background: linear-gradient(#e1ebf8, #b2c3d8); }
</style>
